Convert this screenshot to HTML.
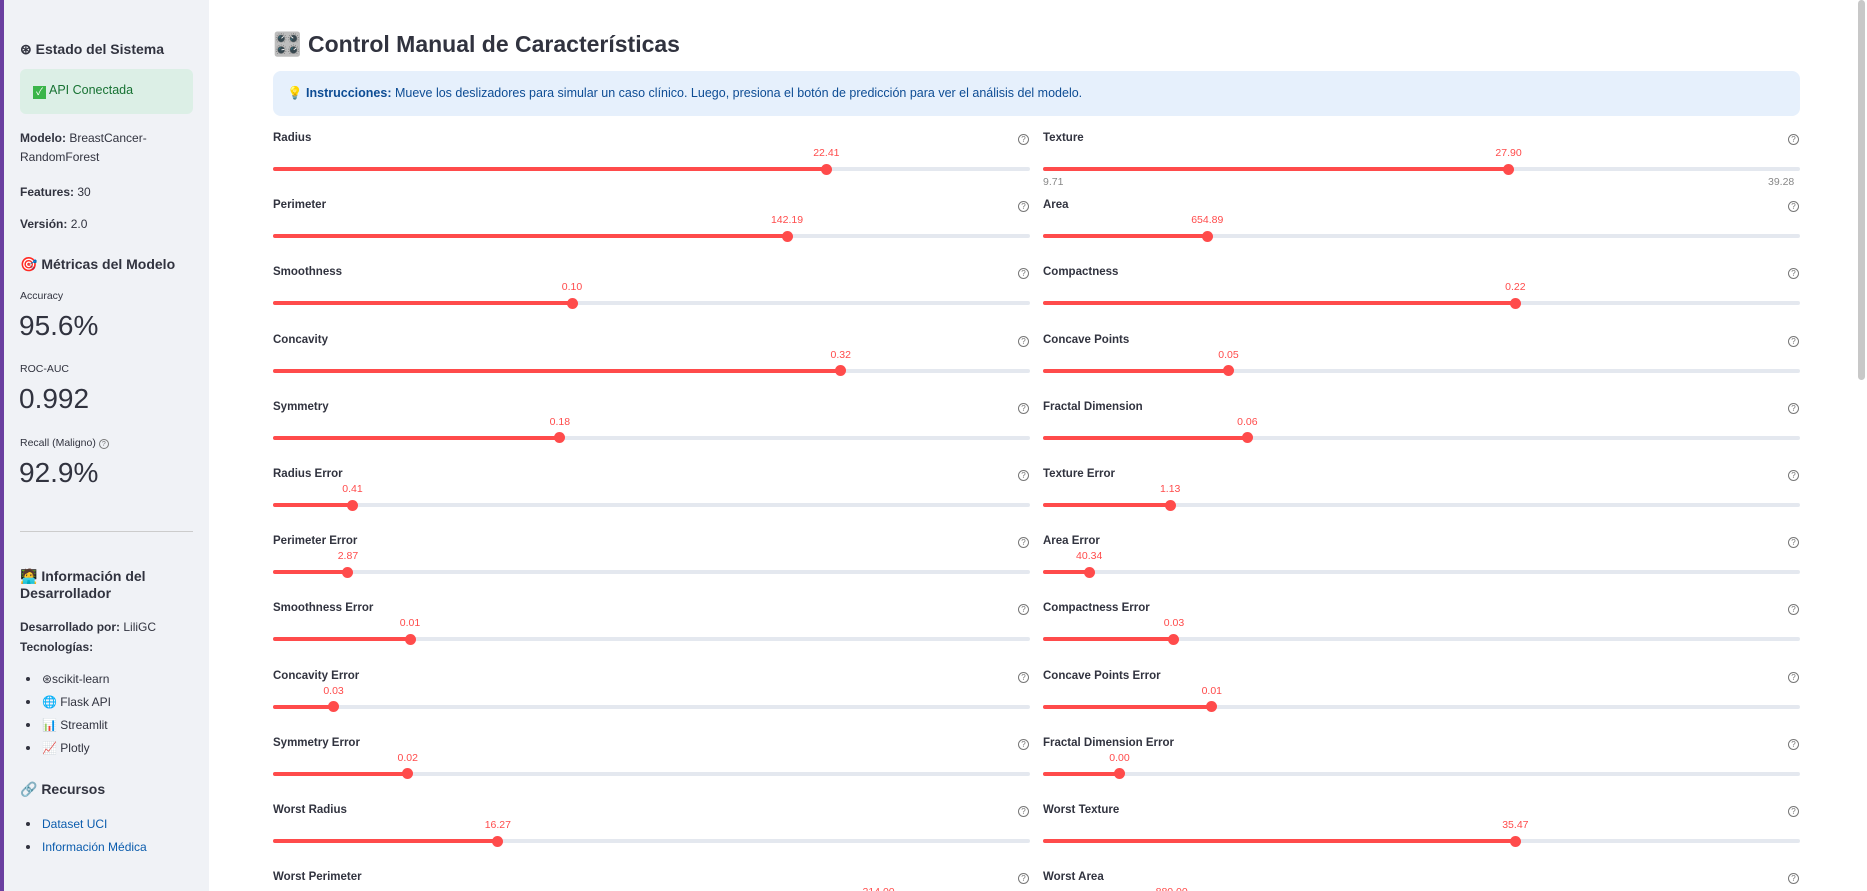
<!DOCTYPE html>
<html style="width:1867px;height:891px;overflow:hidden"><head><meta charset="utf-8"><style>
*{margin:0;padding:0;box-sizing:border-box}
body{width:1867px;height:891px;overflow:hidden;background:#fff;font-family:"Liberation Sans","Noto Sans CJK JP",sans-serif;color:#31333f;position:relative}
.sb{position:absolute;left:0;top:0;width:209px;height:891px;background:#f0f2f6;border-left:4px solid #6b3fa0}
.a{position:absolute;white-space:nowrap}
.s{font-size:12px}
.h{font-size:14px;font-weight:bold}
.m{font-size:28px;color:#31333f}
.api{position:absolute;left:20px;top:69px;width:173px;height:45px;background:#dcefe6;border-radius:6px;color:#177233;font-size:12.5px;padding:14px 13px}
.chk{display:inline-block;width:13px;height:13px;background:#3bb54a;color:#fff;font-size:10px;text-align:center;line-height:13px;margin-right:3px;vertical-align:-1px}
.dot{display:inline-block;width:4px;height:4px;background:#31333f;border-radius:50%;margin:0 12px 2px 6px;vertical-align:middle}
a{color:#0b5cad}
.title{position:absolute;left:273px;top:31px;font-size:23px;font-weight:bold;color:#31333f}
.info{position:absolute;left:273px;top:71px;width:1527px;height:45px;background:#e6f0fc;border-radius:8px;color:#0d4c94;font-size:12.5px;padding:15px 14px}
.lab{position:absolute;font-size:11.5px;font-weight:bold;color:#31333f}
.q{position:absolute;width:11px;height:11px;border:1px solid #777;border-radius:50%;font-size:8px;color:#777;text-align:center;line-height:10px}
.tr{position:absolute;height:4px;background:#e4e8ef;border-radius:2px}
.fill{position:absolute;left:0;top:0;height:4px;background:#ff4b4b;border-radius:2px}
.th{position:absolute;width:11px;height:11px;border-radius:50%;background:#ff4b4b;top:-3.5px;margin-left:-5.5px}
.v{position:absolute;font-size:10.5px;color:#ff4b4b;top:-20px;transform:translateX(-50%)}
.sc{position:absolute;right:2px;top:0;width:7px;height:380px;background:#c8c8c8;border-radius:4px}
#rows{position:absolute;left:0;top:0;width:1867px;height:891px;overflow:hidden}
</style></head><body>
<div class="sb"></div>
<div class="a h" style="left:20px;top:41px">⊛ Estado del Sistema</div>
<div class="api"><span class="chk">✓</span>API Conectada</div>
<div class="a s" style="left:20px;top:131px"><b>Modelo:</b> BreastCancer-</div>
<div class="a s" style="left:20px;top:150px">RandomForest</div>
<div class="a s" style="left:20px;top:185px"><b>Features:</b> 30</div>
<div class="a s" style="left:20px;top:217px"><b>Versión:</b> 2.0</div>
<div class="a h" style="left:20px;top:256px">🎯 Métricas del Modelo</div>
<div class="a" style="left:20px;top:290px;font-size:10.5px">Accuracy</div>
<div class="a m" style="left:19px;top:310px">95.6%</div>
<div class="a" style="left:20px;top:363px;font-size:10.5px">ROC-AUC</div>
<div class="a m" style="left:19px;top:383px">0.992</div>
<div class="a" style="left:20px;top:437px;font-size:10.5px">Recall (Maligno) <span style="display:inline-block;width:10px;height:10px;border:1px solid #777;border-radius:50%;font-size:7px;text-align:center;line-height:9px;color:#777">?</span></div>
<div class="a m" style="left:19px;top:457px">92.9%</div>
<div class="a" style="left:20px;top:531px;width:173px;height:1px;background:#ccc"></div>
<div class="a h" style="left:20px;top:568px">🧑‍💻 Información del</div>
<div class="a h" style="left:20px;top:585px">Desarrollador</div>
<div class="a s" style="left:20px;top:620px"><b>Desarrollado por:</b> LiliGC</div>
<div class="a s" style="left:20px;top:640px"><b>Tecnologías:</b></div>
<div class="a s" style="left:20px;top:672px"><span class="dot"></span>⊛scikit-learn</div>
<div class="a s" style="left:20px;top:695px"><span class="dot"></span>🌐 Flask API</div>
<div class="a s" style="left:20px;top:718px"><span class="dot"></span>📊 Streamlit</div>
<div class="a s" style="left:20px;top:741px"><span class="dot"></span>📈 Plotly</div>
<div class="a h" style="left:20px;top:781px">🔗 Recursos</div>
<div class="a s" style="left:20px;top:817px"><span class="dot"></span><a>Dataset UCI</a></div>
<div class="a s" style="left:20px;top:840px"><span class="dot"></span><a>Información Médica</a></div>

<div class="title">🎛️ Control Manual de Características</div>
<div class="info">💡 <b>Instrucciones:</b> Mueve los deslizadores para simular un caso clínico. Luego, presiona el botón de predicción para ver el análisis del modelo.</div>
<div class="sc"></div>
<div id="rows"></div>
<script>
var L=[["Radius",73.1,"22.41"],["Perimeter",67.9,"142.19"],["Smoothness",39.5,"0.10"],["Concavity",75.0,"0.32"],["Symmetry",37.9,"0.18"],["Radius Error",10.5,"0.41"],["Perimeter Error",9.9,"2.87"],["Smoothness Error",18.1,"0.01"],["Concavity Error",8.0,"0.03"],["Symmetry Error",17.8,"0.02"],["Worst Radius",29.7,"16.27"],["Worst Perimeter",80,"214.00"]];
var R=[["Texture",61.5,"27.90"],["Area",21.7,"654.89"],["Compactness",62.4,"0.22"],["Concave Points",24.5,"0.05"],["Fractal Dimension",27.0,"0.06"],["Texture Error",16.8,"1.13"],["Area Error",6.1,"40.34"],["Compactness Error",17.3,"0.03"],["Concave Points Error",22.3,"0.01"],["Fractal Dimension Error",10.1,"0.00"],["Worst Texture",62.4,"35.47"],["Worst Area",17,"880.00"]];
var h="";
function col(arr,x,w){arr.forEach(function(r,i){var y=132+i*67.2;
h+='<div class="lab" style="left:'+x+'px;top:'+y+'px">'+r[0]+'</div>';
h+='<div class="q" style="left:'+(x+w-12)+'px;top:'+(y+2)+'px">?</div>';
h+='<div class="tr" style="left:'+x+'px;top:'+(y+35)+'px;width:'+w+'px"><div class="fill" style="width:'+r[1]+'%"></div><div class="th" style="left:'+r[1]+'%"></div><div class="v" style="left:'+r[1]+'%">'+r[2]+'</div></div>';});}
col(L,273,757);col(R,1043,757);
h+='<div class="a" style="left:1043px;top:176px;font-size:10.5px;color:#888">9.71</div><div class="a" style="left:1768px;top:176px;font-size:10.5px;color:#888">39.28</div>';
document.getElementById("rows").innerHTML=h;
</script>
</body></html>
